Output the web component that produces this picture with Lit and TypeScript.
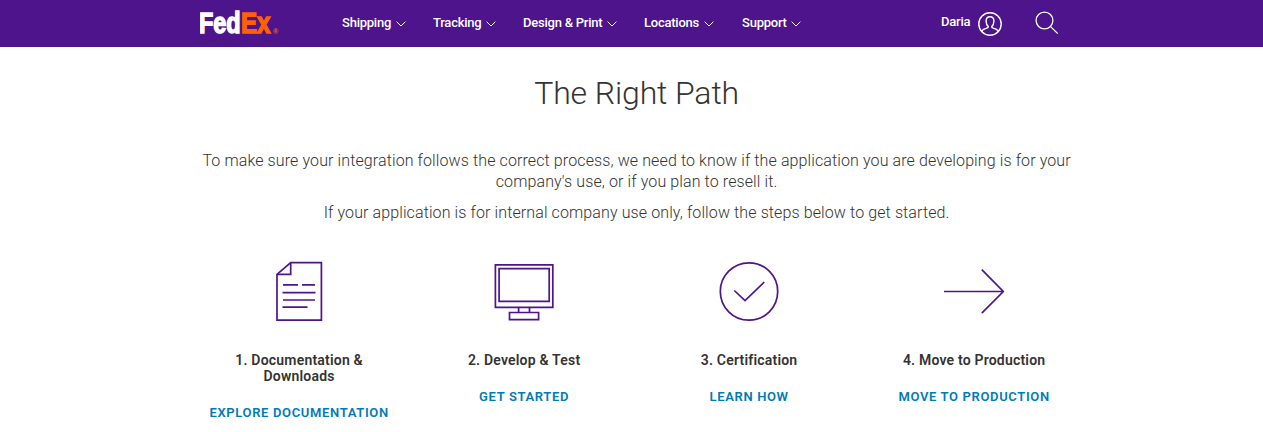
import { LitElement, html, css, svg } from "lit";
import { customElement } from "lit/decorators.js";

const NAV = [
  { label: "Shipping", cls: "n1" },
  { label: "Tracking", cls: "n2" },
  { label: "Design & Print", cls: "n3" },
  { label: "Locations", cls: "n4" },
  { label: "Support", cls: "n5" },
];

const STEPS = [
  {
    title: "1. Documentation & Downloads",
    link: "EXPLORE DOCUMENTATION",
    icon: svg`<path d="M21.7 4.6H52.4V62.2H8V16.4Z" /><path d="M21.7 5V16.4H8" />
      <path d="M14 26.8H29M33 26.8H46M13.5 34.6H46.5M14 42H46M13.5 49.2H38.5" />`,
  },
  {
    title: "2. Develop & Test",
    link: "GET STARTED",
    icon: svg`<path d="M1.4 6.8H58.8V49.3H1.4ZM5.1 10.6H55.2V43.4H5.1Z" />
      <path d="M24.6 49.3V54.5H35.5V49.3M15.5 54.5H44.6V61.6H15.5Z" />`,
  },
  {
    title: "3. Certification",
    link: "LEARN HOW",
    icon: svg`<circle cx="30" cy="33.5" r="28.7" /><path d="M15.3 32.5L26 42.5L45.3 24" />`,
  },
  {
    title: "4. Move to Production",
    link: "MOVE TO PRODUCTION",
    icon: svg`<path d="M0 33.5H59.3M37.8 11.7L59.3 33.5L37.8 55.2" />`,
  },
];

@customElement("app-root")
export class AppRoot extends LitElement {
  static styles = css`
    :host {
      display: block;
      height: 432px;
      overflow: hidden;
      background: #fff;
      color: #333;
      font-family: Roboto, "Liberation Sans", sans-serif;
    }
    .bar {
      height: 47px;
      background: #4d148c;
      color: #fff;
      display: flex;
      align-items: center;
      padding-left: 200px;
      box-sizing: border-box;
      font-size: 13px;
      line-height: 16px;
    }
    .logo {
      width: 142px;
      height: 47px;
      flex: none;
    }
    .word {
      font-family: "Liberation Sans", Arial, sans-serif;
      font-weight: 700;
      font-size: 29px;
    }
    .fed { fill: #fff; stroke: #fff; stroke-width: 1.5; }
    .ex { fill: #ff6200; stroke: #ff6200; stroke-width: 1.5; }
    .reg { fill: #ff6200; font: 700 7px "Liberation Sans", sans-serif; }
    .item {
      display: flex;
      align-items: center;
      flex: none;
      font-weight: 500;
      white-space: nowrap;
      padding-bottom: 2px;
      letter-spacing: -0.23px;
    }
    .n1 { width: 91px; }
    .n2 { width: 90px; }
    .n3 { width: 121px; }
    .n4 { width: 98px; }
    .n5 { width: 199px; }
    .chev { width: 10px; height: 6px; margin: 3px 0 0 4.5px; }
    .line { fill: none; stroke: #fff; }
    .user { width: 37px; padding-bottom: 4px; letter-spacing: -0.2px; }
    .avatar { width: 24px; height: 24px; margin-right: 33px; }
    .search { width: 24px; height: 24px; margin-bottom: 2px; }
    main {
      width: 900px;
      margin-left: 186.6px;
      text-align: center;
    }
    h1 {
      margin: 0;
      padding-top: 26px;
      font-size: 32px;
      line-height: 40px;
      font-weight: 300;
      letter-spacing: -0.12px;
    }
    .copy { padding-top: 37px; }
    p {
      margin: 0 0 10px;
      font-size: 16px;
      line-height: 21px;
      font-weight: 300;
      letter-spacing: 0.11px;
    }
    .steps {
      display: grid;
      grid-template-columns: repeat(4, 225px);
      padding-top: 25px;
    }
    .step {
      display: flex;
      flex-direction: column;
      align-items: center;
    }
    .icon {
      width: 60px;
      height: 66px;
      margin-right: 1.2px;
      fill: none;
      stroke: #4d148c;
      stroke-width: 1.7;
    }
    h2 {
      margin: 28px 0 21px;
      width: 150px;
      font-size: 14px;
      line-height: 16px;
      font-weight: 600;
      letter-spacing: 0.2px;
    }
    a {
      color: #007ab7;
      font-size: 13px;
      line-height: 16px;
      font-weight: 600;
      letter-spacing: 0.65px;
      white-space: nowrap;
    }
  `;

  render() {
    return html`
      <header class="bar">
        <svg class="logo" viewBox="0 0 142 47">
          <text class="word fed" x="-1" y="33" textLength="41.5" lengthAdjust="spacingAndGlyphs">Fed</text>
          <text class="word ex" x="41" y="33" textLength="29.5" lengthAdjust="spacingAndGlyphs">Ex</text>
          <text class="reg" x="73" y="33.5">®</text>
        </svg>
        ${NAV.map(
          (n) => html`<div class="item ${n.cls}"><span>${n.label}</span>
            <svg class="chev line" viewBox="0 0 10 6"><path d="M0.6 0.7L5 5L9.4 0.7" /></svg>
          </div>`
        )}
        <div class="item user">Daria</div>
        <svg class="avatar line" viewBox="0 0 24 24" stroke-width="1.4">
          <circle cx="12" cy="12" r="11.2" />
          <path d="M4 19.8C4 17.6 5.5 17 7.5 16.6C9.3 16.2 10.3 15.9 10.3 14.6C8.8 13.4 8.1 11.4 8.1 9.1C8.1 6.5 9.6 4.8 12 4.8S15.9 6.5 15.9 9.1C15.9 11.4 15.2 13.4 13.7 14.6C13.7 15.9 14.7 16.2 16.5 16.6C18.5 17 20 17.6 20 19.8" />
        </svg>
        <svg class="search line" viewBox="0 0 24 24" stroke-width="1.3">
          <circle cx="9.5" cy="9.5" r="8.4" /><path d="M15.6 15.6L22.8 22.6" />
        </svg>
      </header>
      <main>
        <h1>The Right Path</h1>
        <div class="copy">
          <p>To make sure your integration follows the correct process, we need to know if the application you are developing is for your company's use, or if you plan to resell it.</p>
          <p>If your application is for internal company use only, follow the steps below to get started.</p>
        </div>
        <section class="steps">
          ${STEPS.map(
            (s) => html`<div class="step">
              <svg class="icon" viewBox="0 0 60 66">${s.icon}</svg>
              <h2>${s.title}</h2>
              <a>${s.link}</a>
            </div>`
          )}
        </section>
      </main>
    `;
  }
}
